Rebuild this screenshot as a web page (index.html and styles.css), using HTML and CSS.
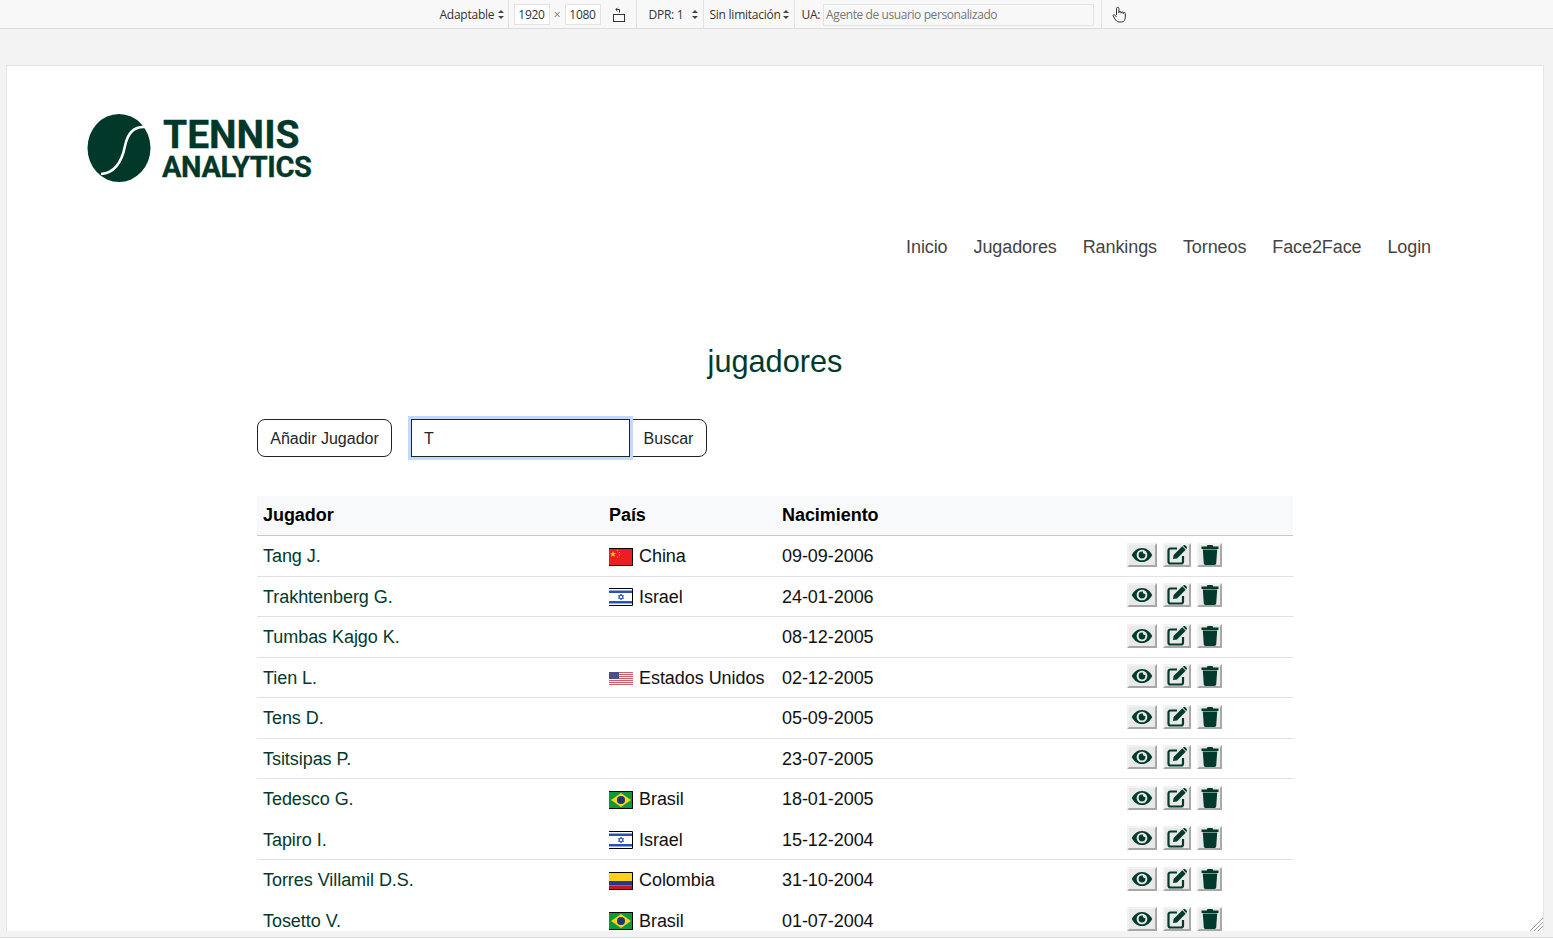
FILE: index.html
```html
<!DOCTYPE html>
<html lang="es">
<head>
    <meta charset="utf-8">
    <title>Tennis Analytics - Jugadores</title>
    <link rel="stylesheet" href="styles.css">
</head>
<body>
<svg class="defs" width="0" height="0">
    <symbol id="i-eye" viewBox="0 0 24 18">
        <path fill="#003a2c" d="M12 1C6.500 1 2.300 5 .5 9c1.800 4 6 8 11.500 8s9.700-4 11.500-8C21.700 5 17.500 1 12 1zm0 14c-3.500 0-6-2.700-6-6s2.500-6 6-6 6 2.700 6 6-2.500 6-6 6z"/>
        <path fill="#003a2c" d="M12 5.200a3.800 3.800 0 1 0 3.800 3.800c0-.5-.1-1-.3-1.400a1.700 1.700 0 0 1-2.300-2.200c-.4-.1-.8-.2-1.200-.2z"/>
    </symbol>
    <symbol id="i-edit" viewBox="0 0 20 20">
        <path fill="none" stroke="#003a2c" stroke-width="2.200" stroke-linejoin="round" d="M10 3.500H3.500a2 2 0 0 0-2 2v11a2 2 0 0 0 2 2h10.500a2 2 0 0 0 2-2V11"/>
        <path fill="#003a2c" d="M15.300 1.300l3.400 3.400-8.700 8.700-4 .6.600-4zM16.300.5c.6-.6 1.500-.6 2.100 0l1.100 1.100c.6.6.6 1.500 0 2.100l-.3.300-3.200-3.200z"/>
    </symbol>
    <symbol id="i-trash" viewBox="0 0 18 20">
        <path fill="#003a2c" d="M6.500 0h5l.7 1.400H17.500v2.600H.5V1.400h5.300zM1.800 4.600h14.400l-1 14c-.1.900-.8 1.400-1.600 1.400H4.400c-.8 0-1.500-.5-1.600-1.400z"/>
    </symbol>
    <symbol id="f-cn" viewBox="0 0 24 18">
        <rect width="24" height="18" fill="#ee1c25"/>
        <path fill="#ffdc00" d="M4 3l.8 2.300H7L5.200 6.600l.7 2.200L4 7.500 2.100 8.800l.7-2.200L1 5.300h2.200z"/>
        <path fill="#ffdc00" d="M8 2h1v1H8zM10 4h1v1h-1zM10 6.500h1v1h-1zM8 8.500h1v1H8z"/>
        <path fill="none" stroke="#000" d="M0 .5h23.500v17H0"/>
    </symbol>
    <symbol id="f-il" viewBox="0 0 24 18">
        <rect width="24" height="18" fill="#fff"/>
        <path fill="#2a50b8" d="M0 2.500h24v2.500H0zM0 13h24v2.500H0z"/>
        <path fill="none" stroke="#3d63c4" d="M12 6l2.600 4.500H9.400zM12 12l2.600-4.500H9.400z"/>
        <path fill="none" stroke="#000" d="M0 .5h23.500v17H0"/>
    </symbol>
    <symbol id="f-us" viewBox="0 0 24 13">
        <rect width="24" height="13" fill="#fbeaea"/>
        <path fill="#c9606a" d="M0 0h24v1H0zM0 2h24v1H0zM0 4h24v1H0zM0 6h24v1H0zM0 8h24v1H0zM0 10h24v1H0zM0 12h24v1H0z"/>
        <rect width="10" height="7" fill="#4a4f86"/>
    </symbol>
    <symbol id="f-br" viewBox="0 0 24 18">
        <rect width="24" height="18" fill="#0a9a3c"/>
        <path fill="#f9d616" d="M12 2l10 7-10 7L2 9z"/>
        <circle cx="12" cy="9" r="4" fill="#1c3578"/>
        <path fill="none" stroke="#000" d="M0 .5h23.500v17H0"/>
    </symbol>
    <symbol id="f-co" viewBox="0 0 24 18">
        <rect width="24" height="9" fill="#fcd116"/>
        <rect y="9" width="24" height="4.500" fill="#1f3a93"/>
        <rect y="13.500" width="24" height="4.500" fill="#ce1126"/>
        <path fill="none" stroke="#000" d="M0 .5h23.500v17H0"/>
    </symbol>
</svg>

<div class="toolbar">
    <div class="tool tool-mode">Adaptable <span class="updown"></span></div>
    <div class="tool tool-size">
        <span class="dim">1920</span><span class="times">×</span><span class="dim">1080</span>
        <svg class="rotate" width="14" height="16" viewBox="0 0 14 16">
            <rect x="1.500" y="7.500" width="11" height="7" fill="none" stroke="#333"/>
            <path fill="none" stroke="#333" d="M7.500 5.500V2.500H4M5.500 .8L3.800 2.500l1.700 1.700"/>
        </svg>
    </div>
    <div class="tool tool-dpr">DPR: 1 <span class="updown"></span></div>
    <div class="tool tool-limit">Sin limitación <span class="updown"></span></div>
    <div class="tool tool-ua">UA: <span class="ua-box">Agente de usuario personalizado</span></div>
    <div class="tool tool-touch">
        <svg class="hand" width="14" height="17" viewBox="0 0 14 17">
            <path fill="none" stroke="#333" stroke-linejoin="round" d="M4.500 9V2.500a1.200 1.200 0 0 1 2.400 0V7m0-.5a1.100 1.100 0 0 1 2.200 0V7.500m0-.5a1.100 1.100 0 0 1 2.200 0v.8m0-.3a1 1 0 0 1 2 0V11c0 2.500-1.200 5-3.500 5H7c-2 0-3-1.500-4-3L1.200 10c-.6-1 .8-2 1.600-1l1.700 2"/>
        </svg>
    </div>
</div>

<div class="stage">
    <div class="page">
        <div class="logo">
            <svg class="ball" width="64" height="68" viewBox="0 0 64 68">
                <ellipse cx="32" cy="34" rx="31.500" ry="34" fill="#02382a"/>
                <path fill="none" stroke="#fff" stroke-width="2.600" d="M58 13C45 12 40 22 38 32C35 47 28 59 14 60"/>
            </svg>
            <div class="logo-text">
                <div class="logo-top">TENNIS</div>
                <div class="logo-bottom">ANALYTICS</div>
            </div>
        </div>

        <nav class="mainnav">
            <a>Inicio</a>
            <a>Jugadores</a>
            <a>Rankings</a>
            <a>Torneos</a>
            <a>Face2Face</a>
            <a>Login</a>
        </nav>

        <h1 class="title">jugadores</h1>

        <div class="content">
            <div class="actions">
                <button type="button" class="btn btn-add">Añadir Jugador</button>
                <div class="search">
                    <input type="text" class="search-input" value="T">
                    <button type="button" class="btn btn-search">Buscar</button>
                </div>
            </div>

            <table class="players">
                <colgroup>
                    <col class="col-name">
                    <col class="col-country">
                    <col class="col-birth">
                    <col class="col-tools">
                </colgroup>
                <thead>
                    <tr><th>Jugador</th><th>País</th><th>Nacimiento</th><th></th></tr>
                </thead>
                <tbody id="rows"></tbody>
            </table>
        </div>
        <svg class="grip" width="14" height="14" viewBox="0 0 14 14">
            <path stroke="#999" d="M1 14L14 1M5 14l9-9M9 14l5-5"/>
        </svg>
    </div>
</div>

<script>
    const players = [
        ["Tang J.", "cn", "China", "09-09-2006", false],
        ["Trakhtenberg G.", "il", "Israel", "24-01-2006", false],
        ["Tumbas Kajgo K.", "", "", "08-12-2005", false],
        ["Tien L.", "us", "Estados Unidos", "02-12-2005", false],
        ["Tens D.", "", "", "05-09-2005", false],
        ["Tsitsipas P.", "", "", "23-07-2005", false],
        ["Tedesco G.", "br", "Brasil", "18-01-2005", true],
        ["Tapiro I.", "il", "Israel", "15-12-2004", false],
        ["Torres Villamil D.S.", "co", "Colombia", "31-10-2004", true],
        ["Tosetto V.", "br", "Brasil", "01-07-2004", false]
    ]

    let html = ""
    for (let i = 0; i < players.length; i++) {
        let p = players[i]
        let flag = ""
        if (p[1]) {
            flag = `<svg class="flag flag-${p[1]}"><use href="#f-${p[1]}"></use></svg>`
        }
        html += `<tr class="${p[4] ? "noline" : ""}">
            <td class="name">${p[0]}</td>
            <td><span class="country">${flag}${p[2]}</span></td>
            <td>${p[3]}</td>
            <td><div class="tools">
                <button type="button" class="tool-btn tb-eye"><svg width="22" height="16"><use href="#i-eye"></use></svg></button>
                <button type="button" class="tool-btn tb-edit"><svg width="20" height="20"><use href="#i-edit"></use></svg></button>
                <button type="button" class="tool-btn tb-trash"><svg width="18" height="20"><use href="#i-trash"></use></svg></button>
            </div></td>
        </tr>`
    }
    document.getElementById("rows").innerHTML = html
</script>
</body>
</html>
```

FILE: styles.css
```css
* {
    box-sizing: border-box;
}
html, body {
    margin: 0;
    height: 939px;
    overflow: hidden;
    background: #fff;
}
body {
    font-family: "Liberation Sans", Arial, sans-serif;
    color: #212529;
}
.defs {
    display: block;
    height: 0;
}

/* devtools bar */
.toolbar {
    display: flex;
    justify-content: center;
    height: 29px;
    background: #f8f8f8;
    border-bottom: 1px solid #dcdcdc;
    font-family: "Open Sans", sans-serif;
    font-size: 12px;
    letter-spacing: -0.25px;
    color: #333;
}
.tool {
    display: flex;
    align-items: center;
    height: 28px;
    padding-top: 1px;
    border-right: 1px solid #e3e3e3;
    white-space: pre;
}
.tool-mode {
    width: 77px;
    padding-left: 8px;
}
.tool-size {
    width: 128px;
    padding-left: 5px;
}
.tool-dpr {
    width: 67px;
    padding-left: 12px;
}
.tool-limit {
    width: 91px;
    padding-left: 6px;
}
.tool-ua {
    width: 307px;
    padding-left: 7px;
}
.tool-touch {
    width: 20px;
    padding-left: 10px;
    border-right: 0;
}
.hand {
    flex: none;
}
.dim {
    width: 36px;
    height: 21px;
    line-height: 19px;
    text-align: center;
    border: 1px solid #e3e3e3;
    background: #fff;
}
.times {
    width: 15px;
    text-align: center;
    color: #777;
}
.rotate {
    margin-left: 11px;
}
.updown {
    position: relative;
    display: inline-block;
    width: 6px;
    height: 9px;
    margin-left: 1px;
}
.updown::before,
.updown::after {
    content: "";
    position: absolute;
    left: 0;
    border-left: 3px solid transparent;
    border-right: 3px solid transparent;
}
.updown::before {
    top: 0;
    border-bottom: 3px solid #444;
}
.updown::after {
    bottom: 0;
    border-top: 3px solid #444;
}
.tool-dpr .updown {
    margin-left: 6px;
}
.tool-limit .updown {
    margin-left: 0;
}
.ua-box {
    width: 271px;
    height: 22px;
    line-height: 20px;
    padding-left: 2px;
    background: #f8f8f8;
    border: 1px solid #e3e3e3;
    letter-spacing: -0.41px;
    color: #777;
}

/* page frame */
.stage {
    height: 909px;
    padding: 36px 9px 7px 6px;
    background: #f3f3f3;
    border-bottom: 1px solid #dcdcdc;
}
.page {
    position: relative;
    height: 866px;
    overflow: hidden;
    background: #fff;
    border: 1px solid #e4e4e4;
    border-bottom: 0;
}
.grip {
    position: absolute;
    right: 0;
    bottom: 0;
}

/* logo */
.logo {
    display: flex;
    align-items: center;
    height: 68px;
    margin: 48px 0 0 80px;
}
.ball {
    flex: none;
}
.logo-text {
    margin: 2px 0 0 11px;
    font-family: Roboto, sans-serif;
    font-weight: 700;
    color: #02382a;
    -webkit-text-stroke: 0.3px #02382a;
}
.logo-top {
    font-size: 39px;
    line-height: 36px;
    margin-left: 1px;
}
.logo-bottom {
    font-size: 29px;
    line-height: 28px;
    letter-spacing: -0.4px;
}

/* nav */
.mainnav {
    display: flex;
    justify-content: flex-end;
    gap: 26px;
    margin-top: 54px;
    padding-right: 112px;
    font-size: 18px;
    line-height: 22px;
    letter-spacing: -0.1px;
    color: #444;
}

.title {
    margin: 86px 0 0;
    font-size: 30.7px;
    line-height: 36px;
    font-weight: 400;
    text-align: center;
    color: #003a2c;
}

/* players */
.content {
    margin-left: 250px;
    width: 1036px;
}
.actions {
    display: flex;
    margin-top: 39px;
    height: 38px;
}
.btn {
    height: 38px;
    padding: 1px 12px 0;
    font: 16px "Liberation Sans", Arial, sans-serif;
    color: #212529;
    background: #fff;
    border: 1px solid #212529;
    border-radius: 8px;
}
.btn-add {
    width: 135px;
}
.search {
    display: flex;
    margin-left: 19px;
}
.search-input {
    position: relative;
    z-index: 1;
    width: 219px;
    height: 38px;
    padding: 1px 12px 0;
    font: 16px "Liberation Sans", Arial, sans-serif;
    color: #212529;
    border: 1px solid #212529;
    outline: 0;
    box-shadow: 0 0 0 3px #c2daff;
}
.btn-search {
    width: 77px;
    border-radius: 0 8px 8px 0;
}
.players {
    width: 1036px;
    margin-top: 39px;
    table-layout: fixed;
    border-collapse: separate;
    border-spacing: 0;
    font-size: 18px;
    letter-spacing: -0.05px;
    color: #111;
}
.col-name {
    width: 346px;
}
.col-country {
    width: 173px;
}
.col-birth {
    width: 345px;
}
.col-tools {
    width: 172px;
}
.players th {
    height: 40px;
    padding: 0 6px;
    text-align: left;
    background: #f8f9fa;
    color: #000;
    border-bottom: 1px solid #c8c8c8;
}
.players td {
    height: 40.5px;
    padding: 2px 6px 0;
    border-bottom: 1px solid #dee2e6;
    white-space: nowrap;
}
.players .noline td {
    border-bottom-color: transparent;
}
.players .name {
    color: #003a2c;
}
.country {
    display: flex;
    align-items: center;
}
.flag {
    flex: none;
    width: 24px;
    height: 18px;
    margin-right: 6px;
}
.flag-us {
    height: 13px;
}
.tools {
    display: flex;
    gap: 6px;
    margin-bottom: 4px;
}
.tool-btn {
    display: flex;
    align-items: center;
    justify-content: center;
    height: 24px;
    padding: 0;
    background: #e9e9e9;
    border: 2px solid;
    border-color: #f2f2f2 #a8a8a8 #a8a8a8 #f2f2f2;
}
.tb-eye {
    width: 30px;
}
.tb-edit {
    width: 28px;
}
.tb-trash {
    width: 25px;
}
```
